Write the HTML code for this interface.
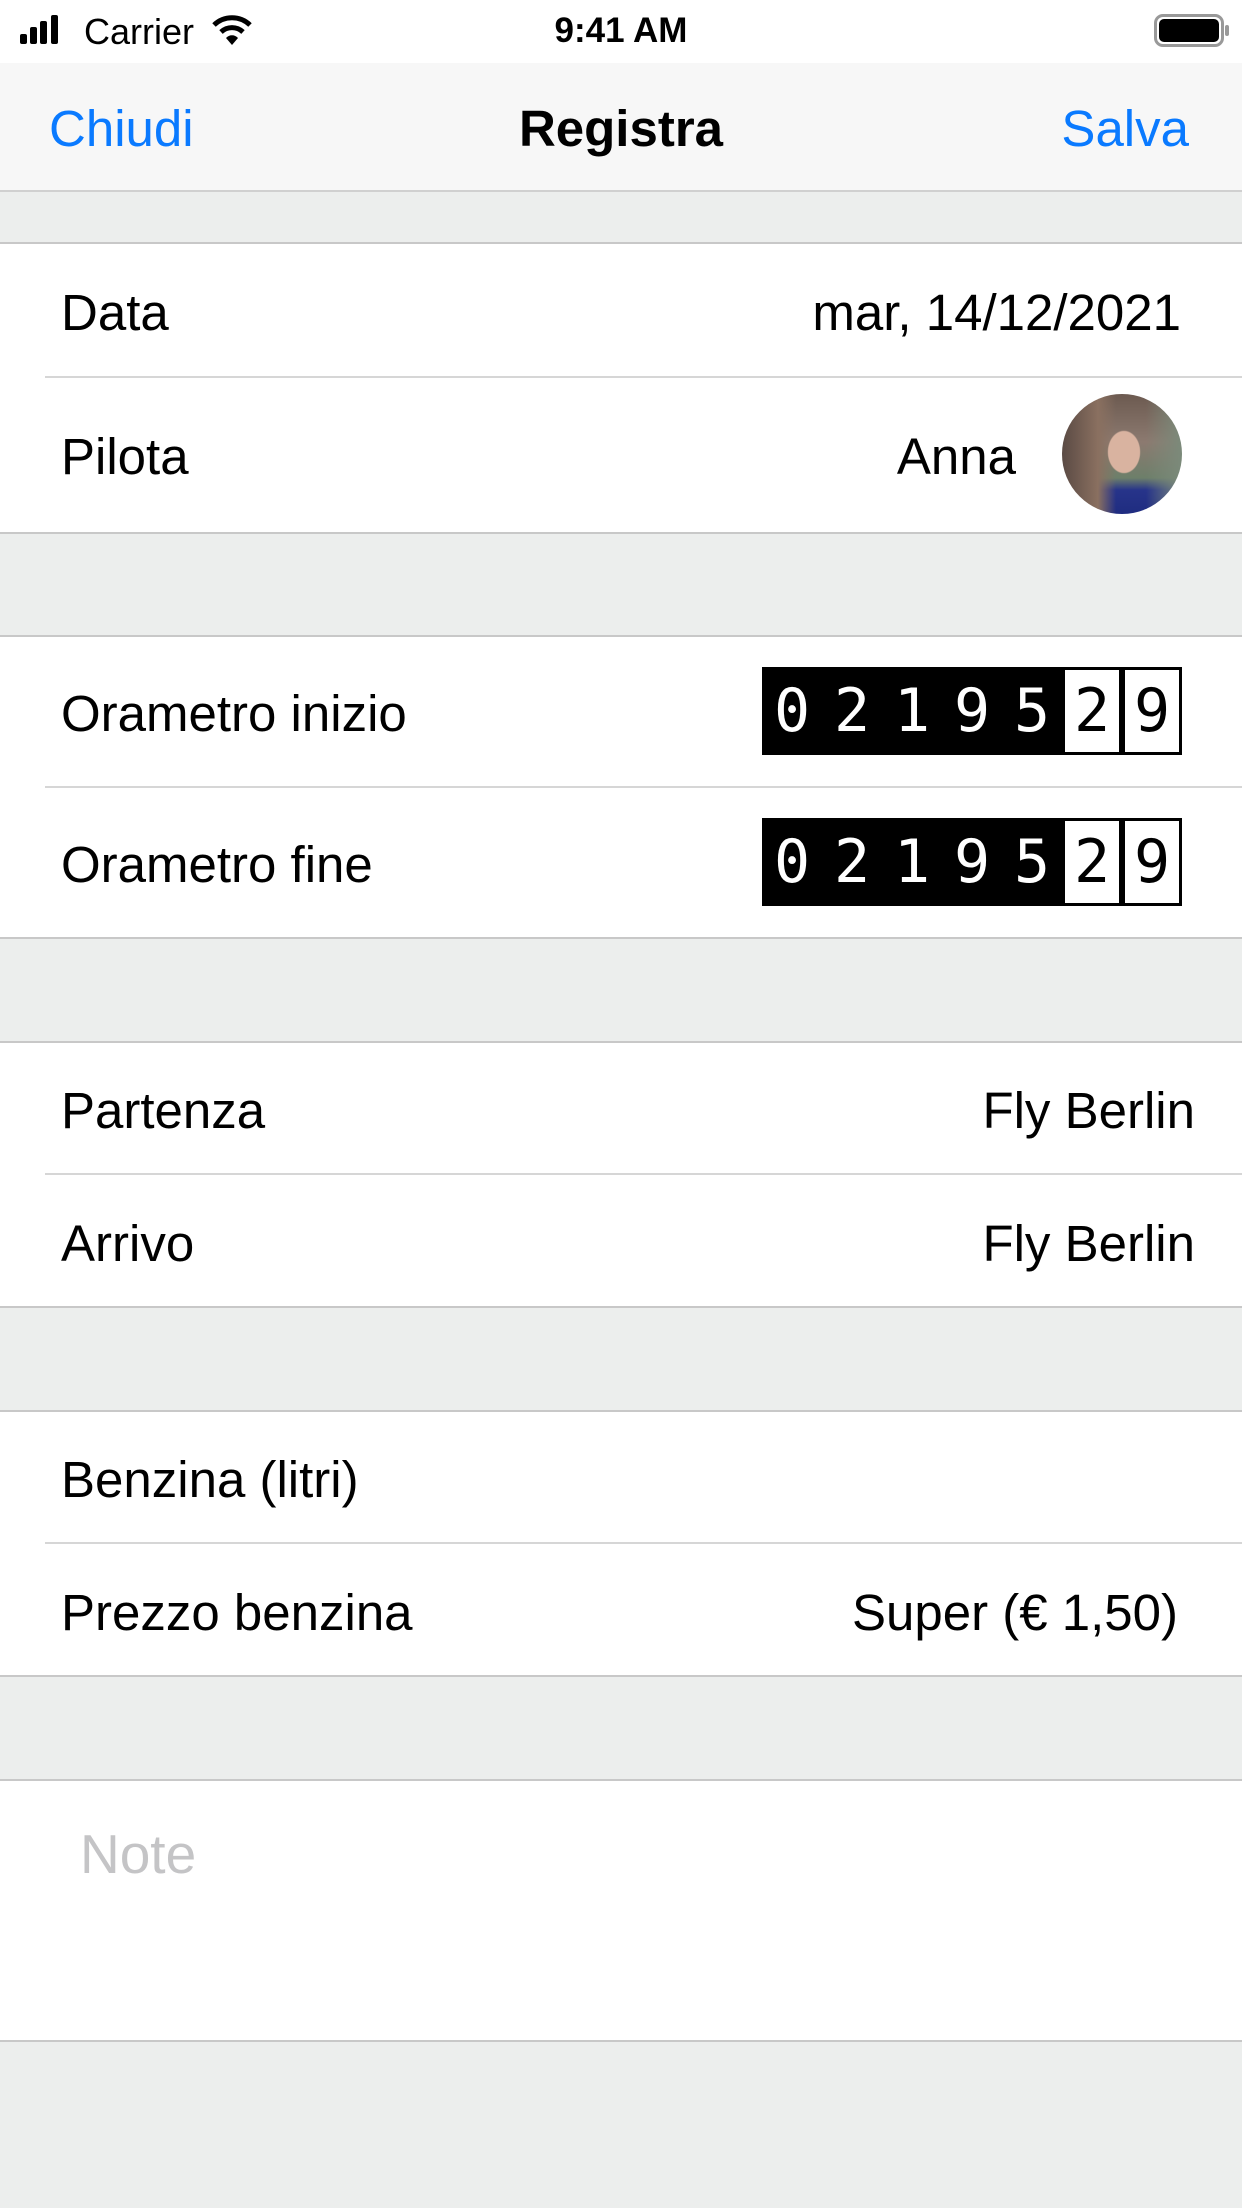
<!DOCTYPE html>
<html><head><meta charset="utf-8"><style>
*{margin:0;padding:0;box-sizing:border-box}
body{width:1242px;height:2208px;background:#eceeed;font-family:"Liberation Sans",sans-serif;position:relative;overflow:hidden;color:#000}
.a{position:absolute}
.w{position:absolute;left:0;width:1242px;background:#fff;border-top:2px solid #c8c8c8;border-bottom:2px solid #c8c8c8}
.sep{position:absolute;left:45px;right:0;height:2px;background:#d6d6d6}
.lbl{position:absolute;left:61px;font-size:51px;line-height:1}
.val{position:absolute;font-size:51px;line-height:1;text-align:right}
.odo{position:absolute;left:762px;width:420px;height:88px;background:#000}
.odo span{position:absolute;top:0;height:88px;font-family:"DejaVu Sans Mono",monospace;font-size:60px;line-height:88px;color:#fff;width:60px;text-align:center}
.odo .b{background:#fff;color:#000;top:3px;height:82px;line-height:82px;width:54px}
</style></head><body>
<div class="a" style="left:0;top:0;width:1242px;height:63px;background:#fff"></div>
<div class="a" style="left:20px;top:34px;width:7px;height:10px;background:#000;border-radius:2px"></div>
<div class="a" style="left:30px;top:27px;width:7px;height:17px;background:#000;border-radius:2px"></div>
<div class="a" style="left:40px;top:21px;width:7px;height:23px;background:#000;border-radius:2px"></div>
<div class="a" style="left:51px;top:15px;width:7px;height:29px;background:#000;border-radius:2px"></div>
<div class="a" style="left:84px;top:11px;font-size:36px">Carrier</div>
<svg class="a" style="left:212px;top:13px" width="40" height="34" viewBox="0 0 40 34"><path d="M2 12 A26 26 0 0 1 38 12" stroke="#000" stroke-width="5" fill="none"/><path d="M9 19 A16 16 0 0 1 31 19" stroke="#000" stroke-width="5" fill="none"/><path d="M14 25 L20 32 L26 25 A8 8 0 0 0 14 25Z" fill="#000"/></svg>
<div class="a" style="left:0;width:1242px;top:11px;text-align:center;font-size:35px;font-weight:bold">9:41 AM</div>
<div class="a" style="left:1154px;top:14px;width:70px;height:33px;border:3px solid #999;border-radius:9px"></div>
<div class="a" style="left:1159px;top:19px;width:60px;height:23px;background:#000;border-radius:5px"></div>
<div class="a" style="left:1225px;top:25px;width:4px;height:11px;background:#999;border-radius:2px"></div>
<div class="a" style="left:0;top:63px;width:1242px;height:129px;background:#f7f7f7;border-bottom:2px solid #d0d0d0"></div>
<div class="a" style="left:49px;top:99px;font-size:51px;color:#0a7aff">Chiudi</div>
<div class="a" style="left:0;width:1242px;top:99px;text-align:center;font-size:51px;font-weight:bold">Registra</div>
<div class="a" style="right:53px;top:99px;font-size:51px;color:#0a7aff">Salva</div>

<div class="w" style="top:242px;height:292px"></div>
<div class="sep" style="top:376px"></div>
<div class="lbl" style="top:287px">Data</div>
<div class="val" style="right:61px;top:287px">mar, 14/12/2021</div>
<div class="lbl" style="top:431px">Pilota</div>
<div class="val" style="right:226px;top:431px">Anna</div>
<div class="a" style="left:1062px;top:394px;width:120px;height:120px;border-radius:50%;overflow:hidden;background:radial-gradient(ellipse 26px 34px at 62px 58px,#d9b3a0 60%,transparent 64%),linear-gradient(90deg,#5a4a44 0%,#8a7060 30%,transparent 45%,transparent 70%,#7b8a7a 100%),linear-gradient(#6c5a50 0%,#8c7a70 40%,#6d7f6a 70%,#27348a 80%,#1f2c80 100%)"></div>

<div class="w" style="top:635px;height:304px"></div>
<div class="sep" style="top:786px"></div>
<div class="lbl" style="top:688px">Orametro inizio</div>
<div class="odo" style="top:667px"><span style="left:0">0</span><span style="left:60px">2</span><span style="left:120px">1</span><span style="left:180px">9</span><span style="left:240px">5</span><span class="b" style="left:303px">2</span><span class="b" style="left:363px">9</span></div>
<div class="lbl" style="top:839px">Orametro fine</div>
<div class="odo" style="top:818px"><span style="left:0">0</span><span style="left:60px">2</span><span style="left:120px">1</span><span style="left:180px">9</span><span style="left:240px">5</span><span class="b" style="left:303px">2</span><span class="b" style="left:363px">9</span></div>

<div class="w" style="top:1041px;height:267px"></div>
<div class="sep" style="top:1173px"></div>
<div class="lbl" style="top:1085px">Partenza</div>
<div class="val" style="right:47px;top:1085px">Fly Berlin</div>
<div class="lbl" style="top:1218px">Arrivo</div>
<div class="val" style="right:47px;top:1218px">Fly Berlin</div>

<div class="w" style="top:1410px;height:267px"></div>
<div class="sep" style="top:1542px"></div>
<div class="lbl" style="top:1454px">Benzina (litri)</div>
<div class="lbl" style="top:1587px">Prezzo benzina</div>
<div class="val" style="right:64px;top:1587px">Super (€ 1,50)</div>

<div class="w" style="top:1779px;height:263px"></div>
<div class="a" style="left:80px;top:1822px;font-size:55px;color:#c4c4c6">Note</div>
</body></html>
